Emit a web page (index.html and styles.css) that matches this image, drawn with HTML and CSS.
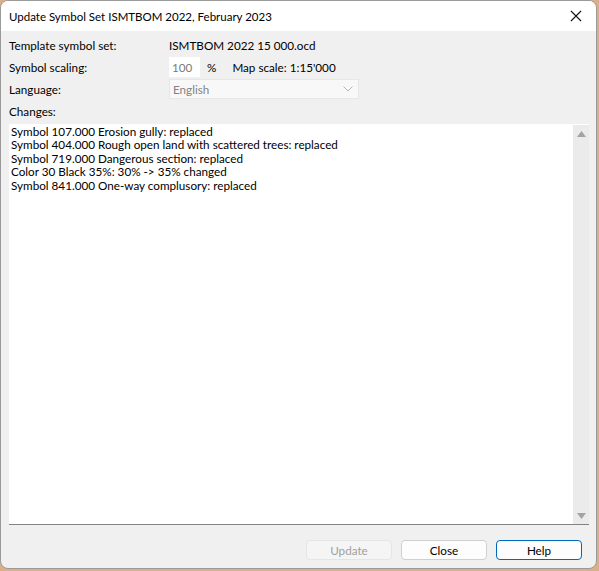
FILE: index.html
```html
<!DOCTYPE html>
<html lang="en">
<head>
<meta charset="utf-8">
<title>Update Symbol Set</title>
<link rel="stylesheet" href="styles.css">
</head>
<body>
<div class="window">
  <div class="titlebar">
    <span class="title">Update Symbol Set ISMTBOM 2022, February 2023</span>
    <span class="close-x">
      <svg width="12" height="12" viewBox="0 0 12 12"><path d="M1 1 L11 11 M11 1 L1 11" stroke="#111" stroke-width="1.1" fill="none"/></svg>
    </span>
  </div>
  <div class="content">
    <div class="form">
      <div class="label">Template symbol set:</div>
      <div class="value">ISMTBOM 2022 15 000.ocd</div>

      <div class="label">Symbol scaling:</div>
      <div class="value scaling">
        <span class="input">100</span>
        <span class="pct">%</span>
        <span class="mapscale">Map scale: 1:15'000</span>
      </div>

      <div class="label">Language:</div>
      <div class="value">
        <span class="combo">
          <span class="combo-text">English</span>
          <svg class="chev" width="10" height="6" viewBox="0 0 10 6"><path d="M0.5 0.5 L5 5 L9.5 0.5" stroke="#b4b4b4" stroke-width="1" fill="none"/></svg>
        </span>
      </div>

      <div class="label">Changes:</div>
      <div></div>
    </div>

    <div class="changes">
      <div class="lines">
        <div>Symbol 107.000 Erosion gully: replaced</div>
        <div>Symbol 404.000 Rough open land with scattered trees: replaced</div>
        <div>Symbol 719.000 Dangerous section: replaced</div>
        <div>Color 30 Black 35%: 30% -&gt; 35% changed</div>
        <div>Symbol 841.000 One-way complusory: replaced</div>
      </div>
      <div class="scrollbar">
        <svg width="9" height="6" viewBox="0 0 9 6"><path d="M4.5 0 L9 6 L0 6 Z" fill="#a3a3a3"/></svg>
        <svg width="9" height="6" viewBox="0 0 9 6"><path d="M0 0 L9 0 L4.5 6 Z" fill="#a3a3a3"/></svg>
      </div>
    </div>

    <div class="buttons">
      <button class="btn disabled">Update</button>
      <button class="btn">Close</button>
      <button class="btn default">Help</button>
    </div>
  </div>
</div>
</body>
</html>
```
FILE: styles.css
```css
html, body {
  margin: 0;
  padding: 0;
}

body {
  width: 599px;
  height: 571px;
  background: #d9b08a;
  font-family: "Segoe UI", Lato, "Liberation Sans", sans-serif;
  font-size: 11.7px;
  color: #000;
  overflow: hidden;
}

.window {
  width: 597px;
  height: 569px;
  background: #f0f0f0;
  border: 1px solid #9a9a9a;
  border-radius: 8px;
  box-sizing: border-box;
  overflow: hidden;
  display: flex;
  flex-direction: column;
}

.titlebar {
  height: 30px;
  background: #fff;
  display: flex;
  align-items: center;
  justify-content: space-between;
  padding: 0 14px 0 8px;
  flex: none;
}

.title {
  font-size: 11.5px;
  color: #000;
}

.close-x {
  display: flex;
  width: 12px;
  height: 12px;
}

.content {
  flex: 1;
  display: flex;
  flex-direction: column;
  padding: 3px 7px 8px 8px;
}

.form {
  display: grid;
  grid-template-columns: 160px 1fr;
  grid-auto-rows: 22px;
  align-items: center;
}

.scaling {
  display: flex;
  align-items: center;
}

.input {
  width: 31px;
  height: 20px;
  background: #fff;
  color: #7a7a7a;
  line-height: 20px;
  padding-left: 3px;
  box-sizing: border-box;
}

.pct {
  margin-left: 7px;
}

.mapscale {
  margin-left: 16px;
}

.combo {
  display: flex;
  align-items: center;
  justify-content: space-between;
  width: 190px;
  height: 20px;
  background: #f8f8f8;
  border: 1px solid #e6e6e6;
  box-sizing: border-box;
  padding: 0 5px 0 3px;
  color: #838383;
}

.chev {
  display: block;
}

.changes {
  margin-top: 2px;
  height: 401px;
  background: #fff;
  border-bottom: 1px solid #838383;
  box-sizing: border-box;
  display: flex;
  flex: none;
}

.lines {
  flex: 1;
  padding: 1px 2px;
  line-height: 13.4px;
}

.scrollbar {
  width: 16px;
  margin: 1px 0 0 0;
  background: #ebebeb;
  display: flex;
  flex-direction: column;
  justify-content: space-between;
  align-items: center;
  padding: 6px 0 5px;
  box-sizing: border-box;
}

.buttons {
  display: flex;
  justify-content: flex-end;
  gap: 9px;
  margin-top: 15px;
  padding-right: 7px;
}

.btn {
  width: 86px;
  height: 20px;
  font: inherit;
  background: #fdfdfd;
  border: 1px solid #d0d0d0;
  border-radius: 4px;
  color: #000;
  padding: 0;
}

.btn.disabled {
  background: #f5f5f5;
  border-color: #e5e5e5;
  color: #a0a0a0;
}

.btn.default {
  border-color: #0067c0;
}
```
